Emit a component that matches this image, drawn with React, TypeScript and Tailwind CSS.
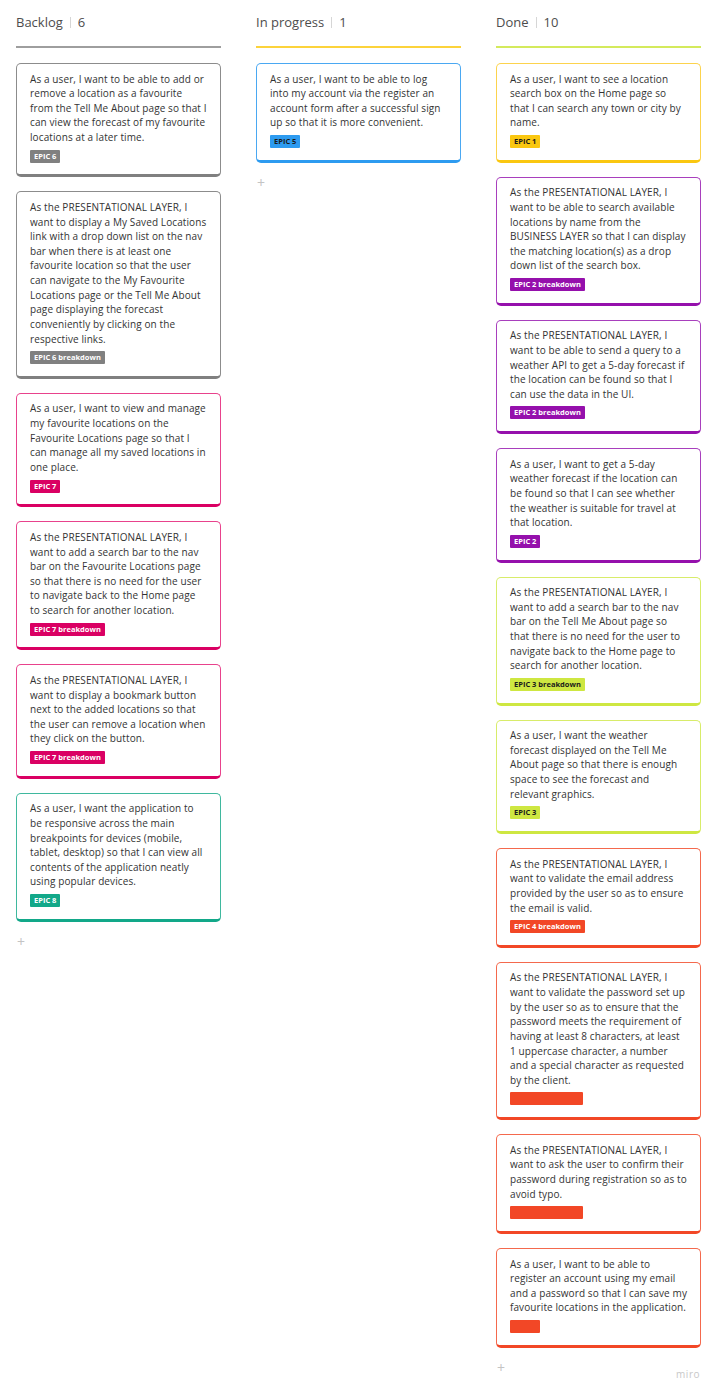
import React from "react";

type Tone = "gray" | "pink" | "teal" | "blue" | "yellow" | "purple" | "lime" | "red";

const toneClasses: Record<Tone, { card: string; tag: string }> = {
  gray: {
    card: "border-[#8c8c8c] border-b-[#808080]",
    tag: "bg-[#808080] text-white",
  },
  pink: {
    card: "border-[#e8428c] border-b-[#da0063]",
    tag: "bg-[#da0063] text-white",
  },
  teal: {
    card: "border-[#3fb89e] border-b-[#12a889]",
    tag: "bg-[#12a889] text-white",
  },
  blue: {
    card: "border-[#4aa8f2] border-b-[#2d9bf0]",
    tag: "bg-[#2d9bf0] text-[#1a1a1a]",
  },
  yellow: {
    card: "border-[#fcd34d] border-b-[#fac710]",
    tag: "bg-[#fac710] text-[#1a1a1a]",
  },
  purple: {
    card: "border-[#a83fbd] border-b-[#9510ac]",
    tag: "bg-[#9510ac] text-white",
  },
  lime: {
    card: "border-[#d8ec6a] border-b-[#cee741]",
    tag: "bg-[#cee741] text-[#1a1a1a]",
  },
  red: {
    card: "border-[#f4694d] border-b-[#f24726]",
    tag: "bg-[#f24726] text-white",
  },
};

type Card = { tone: Tone; text: string; tag: string; tagWidth?: string };

type Column = { title: string; count: number; line: string; cards: Card[] };

const columns: Column[] = [
  {
    title: "Backlog",
    count: 6,
    line: "border-[#9e9e9e]",
    cards: [
      {
        tone: "gray",
        tag: "EPIC 6",
        text: "As a user, I want to be able to add or\nremove a location as a favourite\nfrom the Tell Me About page so that I\ncan view the forecast of my favourite\nlocations at a later time.",
      },
      {
        tone: "gray",
        tag: "EPIC 6 breakdown",
        text: "As the PRESENTATIONAL LAYER, I\nwant to display a My Saved Locations\nlink with a drop down list on the nav\nbar when there is at least one\nfavourite location so that the user\ncan navigate to the My Favourite\nLocations page or the Tell Me About\npage displaying the forecast\nconveniently by clicking on the\nrespective links.",
      },
      {
        tone: "pink",
        tag: "EPIC 7",
        text: "As a user, I want to view and manage\nmy favourite locations on the\nFavourite Locations page so that I\ncan manage all my saved locations in\none place.",
      },
      {
        tone: "pink",
        tag: "EPIC 7 breakdown",
        text: "As the PRESENTATIONAL LAYER, I\nwant to add a search bar to the nav\nbar on the Favourite Locations page\nso that there is no need for the user\nto navigate back to the Home page\nto search for another location.",
      },
      {
        tone: "pink",
        tag: "EPIC 7 breakdown",
        text: "As the PRESENTATIONAL LAYER, I\nwant to display a bookmark button\nnext to the added locations so that\nthe user can remove a location when\nthey click on the button.",
      },
      {
        tone: "teal",
        tag: "EPIC 8",
        text: "As a user, I want the application to\nbe responsive across the main\nbreakpoints for devices (mobile,\ntablet, desktop) so that I can view all\ncontents of the application neatly\nusing popular devices.",
      },
    ],
  },
  {
    title: "In progress",
    count: 1,
    line: "border-[#fcd33b]",
    cards: [
      {
        tone: "blue",
        tag: "EPIC 5",
        text: "As a user, I want to be able to log\ninto my account via the register an\naccount form after a successful sign\nup so that it is more convenient.",
      },
    ],
  },
  {
    title: "Done",
    count: 10,
    line: "border-[#d4ea5c]",
    cards: [
      {
        tone: "yellow",
        tag: "EPIC 1",
        text: "As a user, I want to see a location\nsearch box on the Home page so\nthat I can search any town or city by\nname.",
      },
      {
        tone: "purple",
        tag: "EPIC 2 breakdown",
        text: "As the PRESENTATIONAL LAYER, I\nwant to be able to search available\nlocations by name from the\nBUSINESS LAYER so that I can display\nthe matching location(s) as a drop\ndown list of the search box.",
      },
      {
        tone: "purple",
        tag: "EPIC 2 breakdown",
        text: "As the PRESENTATIONAL LAYER, I\nwant to be able to send a query to a\nweather API to get a 5-day forecast if\nthe location can be found so that I\ncan use the data in the UI.",
      },
      {
        tone: "purple",
        tag: "EPIC 2",
        text: "As a user, I want to get a 5-day\nweather forecast if the location can\nbe found so that I can see whether\nthe weather is suitable for travel at\nthat location.",
      },
      {
        tone: "lime",
        tag: "EPIC 3 breakdown",
        text: "As the PRESENTATIONAL LAYER, I\nwant to add a search bar to the nav\nbar on the Tell Me About page so\nthat there is no need for the user to\nnavigate back to the Home page to\nsearch for another location.",
      },
      {
        tone: "lime",
        tag: "EPIC 3",
        text: "As a user, I want the weather\nforecast displayed on the Tell Me\nAbout page so that there is enough\nspace to see the forecast and\nrelevant graphics.",
      },
      {
        tone: "red",
        tag: "EPIC 4 breakdown",
        text: "As the PRESENTATIONAL LAYER, I\nwant to validate the email address\nprovided by the user so as to ensure\nthe email is valid.",
      },
      {
        tone: "red",
        tag: "",
        tagWidth: "w-[73px]",
        text: "As the PRESENTATIONAL LAYER, I\nwant to validate the password set up\nby the user so as to ensure that the\npassword meets the requirement of\nhaving at least 8 characters, at least\n1 uppercase character, a number\nand a special character as requested\nby the client.",
      },
      {
        tone: "red",
        tag: "",
        tagWidth: "w-[73px]",
        text: "As the PRESENTATIONAL LAYER, I\nwant to ask the user to confirm their\npassword during registration so as to\navoid typo.",
      },
      {
        tone: "red",
        tag: "",
        tagWidth: "w-[30px]",
        text: "As a user, I want to be able to\nregister an account using my email\nand a password so that I can save my\nfavourite locations in the application.",
      },
    ],
  },
];

const StickyCard = ({ card }: { card: Card }) => {
  const tone = toneClasses[card.tone];
  return (
    <div
      className={`rounded-[5px] border border-b-[3px] bg-white pl-[13px] pr-[10px] pt-[7.5px] pb-[11.8px] ${tone.card}`}
    >
      <p className="whitespace-pre-line text-[10px] leading-[14.625px] text-[#333333] tracking-[0.1px]">
        {card.text}
      </p>
      <div className="mt-[5px] flex">
        {card.tag ? (
          <span
            className={`h-[13px] rounded-[1px] px-[4px] text-[7.5px] font-bold leading-[13px] ${tone.tag}`}
          >
            {card.tag}
          </span>
        ) : (
          <span className={`h-[13px] rounded-[1px] ${card.tagWidth} ${tone.tag}`} />
        )}
      </div>
    </div>
  );
};

export default function App() {
  return (
    <div
      className="relative min-h-[1393px] w-[717px] bg-white"
      style={{ fontFamily: '"Open Sans", "Noto Sans", sans-serif' }}
    >
      <div className="flex items-start gap-[35px] px-[16px]">
        {columns.map((col) => (
          <div key={col.title} className="flex w-[205px] flex-col">
            <div className={`h-[48px] border-b-2 pt-[12px] ${col.line}`}>
              <div className="flex items-center text-[13px] leading-[20px] text-[#4d4d4d]">
                <span>{col.title}</span>
                <span className="mx-[7px] h-[11px] w-px bg-[#d6d6d6]" />
                <span>{col.count}</span>
              </div>
            </div>
            <div className="mt-[15px] flex flex-col gap-[14px]">
              {col.cards.map((card, i) => (
                <StickyCard key={i} card={card} />
              ))}
            </div>
            <div className="mt-[12px] pl-[1px] text-[14px] leading-[16px] text-[#c4c4c4]">+</div>
          </div>
        ))}
      </div>
      <div className="absolute right-[17px] top-[1367px] text-[10px] tracking-[0.5px] text-[#c8c8c8]">
        miro
      </div>
    </div>
  );
}
